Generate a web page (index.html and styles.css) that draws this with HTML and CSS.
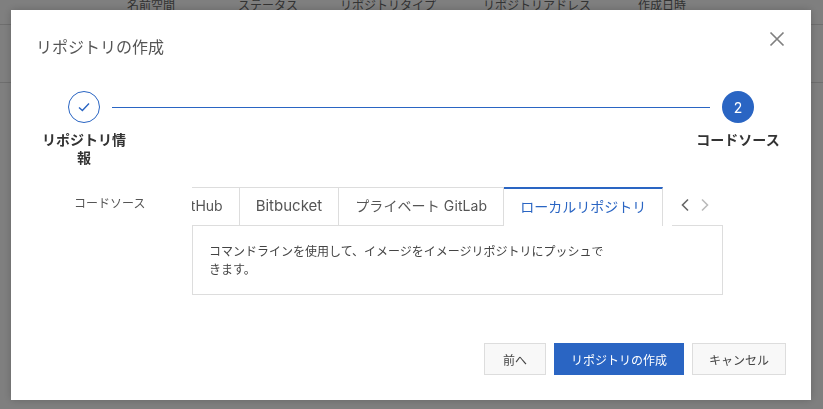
FILE: index.html
```html
<!DOCTYPE html>
<html lang="ja">
<head>
  <meta charset="UTF-8" />
  <title>リポジトリの作成</title>
  <link rel="stylesheet" href="styles.css">
</head>
<body>
  <div class="table-bg">
    <div class="table-head">
      <span>名前空間</span>
      <span>ステータス</span>
      <span>リポジトリタイプ</span>
      <span>リポジトリアドレス</span>
      <span>作成日時</span>
    </div>
    <div class="table-row"></div>
  </div>

  <div class="overlay">
    <div class="modal">
      <div class="modal-header">
        <h1 class="modal-title">リポジトリの作成</h1>
        <svg class="close-icon" width="16" height="16" viewBox="0 0 16 16">
          <path d="M1.5 1.5l13 13M14.5 1.5l-13 13" fill="none" stroke="#808080" stroke-width="1.7"/>
        </svg>
      </div>

      <div class="steps">
        <div class="step">
          <div class="step-circle done">
            <svg width="14" height="12" viewBox="0 0 14 12">
              <path d="M2 6.4l3.4 3.2L12 2.6" fill="none" stroke="#2a65c3" stroke-width="1.4"/>
            </svg>
          </div>
          <div class="step-label">リポジトリ情報</div>
        </div>
        <div class="step-line"></div>
        <div class="step">
          <div class="step-circle current">2</div>
          <div class="step-label">コードソース</div>
        </div>
      </div>

      <div class="form-row">
        <div class="form-label">コードソース</div>
        <div class="form-body">
          <div class="tabs">
            <div class="tabs-viewport">
              <div class="tabs-list">
                <div class="tab">GitHub</div>
                <div class="tab tab-latin">Bitbucket</div>
                <div class="tab tab-mixed">プライベート GitLab</div>
                <div class="tab active">ローカルリポジトリ</div>
              </div>
            </div>
            <div class="tabs-arrows">
              <svg width="10" height="14" viewBox="0 0 10 14">
                <path d="M8 1.5L2.5 7 8 12.5" fill="none" stroke="#666" stroke-width="1.6"/>
              </svg>
              <svg width="10" height="14" viewBox="0 0 10 14">
                <path d="M2 1.5L7.5 7 2 12.5" fill="none" stroke="#bbb" stroke-width="1.6"/>
              </svg>
            </div>
          </div>
          <div class="tab-pane">
            <p>コマンドラインを使用して、イメージをイメージリポジトリにプッシュできます。</p>
          </div>
        </div>
      </div>

      <div class="modal-footer">
        <button class="btn">前へ</button>
        <button class="btn primary">リポジトリの作成</button>
        <button class="btn">キャンセル</button>
      </div>
    </div>
  </div>
</body>
</html>
```

FILE: styles.css
```css
* {
  box-sizing: border-box;
}

html, body {
  height: 100%;
}

body {
  margin: 0;
  overflow: hidden;
  background: #fff;
  font-family: "Inter", "Noto Sans CJK JP", sans-serif;
  color: #333;
}

.table-head {
  display: grid;
  grid-template-columns: 111px 102px 143px 155px auto;
  height: 25px;
  padding-left: 127px;
  border-bottom: 1px solid #ddd;
  font-size: 12px;
  line-height: 12px;
  color: #666;
}

.table-row {
  height: 58px;
  border-bottom: 1px solid #ddd;
}

.overlay {
  position: fixed;
  top: 0;
  left: 0;
  right: 0;
  bottom: 0;
  padding: 10px 12px 9px 11px;
  background: rgba(0, 0, 0, 0.5);
}

.modal {
  display: flex;
  flex-direction: column;
  height: 100%;
  background: #fff;
  box-shadow: 0 0 8px rgba(0, 0, 0, 0.2);
}

.modal-header {
  display: flex;
  justify-content: space-between;
  padding: 26px 26px 0 25px;
}

.modal-title {
  margin: 0;
  font-size: 16px;
  font-weight: 400;
  line-height: 22px;
  color: #555;
}

.close-icon {
  margin-top: -5px;
}

.steps {
  display: flex;
  align-items: flex-start;
  margin-top: 33px;
  padding: 0 28px;
}

.step {
  width: 90px;
  flex-shrink: 0;
  text-align: center;
}

.step-circle {
  display: flex;
  align-items: center;
  justify-content: center;
  width: 32px;
  height: 32px;
  margin: 0 auto;
  border-radius: 50%;
  font-size: 14px;
}

.step-circle.done {
  border: 1px solid #2a65c3;
  background: #fff;
}

.step-circle.current {
  background: #2a65c3;
  color: #fff;
}

.step-label {
  margin-top: 8px;
  font-size: 14px;
  font-weight: 600;
  line-height: 18px;
  color: #333;
}

.step-line {
  flex: 1;
  height: 1px;
  margin: 16px -17px 0 -17px;
  background: #2a65c3;
}

.form-row {
  display: flex;
  margin-top: 20px;
  padding-left: 63px;
}

.form-label {
  width: 118px;
  padding-top: 9px;
  font-size: 12px;
  line-height: 16px;
  color: #555;
}

.form-body {
  width: 531px;
}

.tabs {
  display: flex;
  height: 39px;
}

.tabs-viewport {
  width: 480px;
  overflow: hidden;
}

.tabs-list {
  display: flex;
  height: 39px;
  margin-left: -31px;
}

.tab {
  flex-shrink: 0;
  height: 39px;
  padding: 0 16px;
  border: 1px solid #ddd;
  border-left: none;
  font-size: 14px;
  line-height: 36px;
  white-space: nowrap;
  color: #555;
}

.tab-latin {
  font-size: 15px;
}

.tab-mixed {
  letter-spacing: 0.1px;
}

.tab.active {
  border-top: 2px solid #2a65c3;
  border-bottom: none;
  background: #fff;
  line-height: 35px;
  color: #2a65c3;
}

.tabs-arrows {
  display: flex;
  flex: 1;
  align-items: center;
  gap: 10px;
  padding: 0 0 2px 8px;
  border-bottom: 1px solid #ddd;
}

.tab-pane {
  height: 70px;
  margin-top: -1px;
  padding: 18px 16px 0;
  border: 1px solid #ddd;
  border-top: none;
  font-size: 12px;
  line-height: 18px;
  color: #444;
}

.tab-pane p {
  width: 400px;
  margin: 0;
}

.modal-footer {
  display: flex;
  justify-content: flex-end;
  gap: 8px;
  margin-top: auto;
  padding: 0 25px 25px 0;
}

.btn {
  height: 32px;
  min-width: 62px;
  padding: 0 16px;
  border: 1px solid #ddd;
  background: #f8f8f8;
  font-family: inherit;
  font-size: 12px;
  color: #444;
}

.btn.primary {
  border-color: #2a65c3;
  background: #2a65c3;
  color: #fff;
}
```
